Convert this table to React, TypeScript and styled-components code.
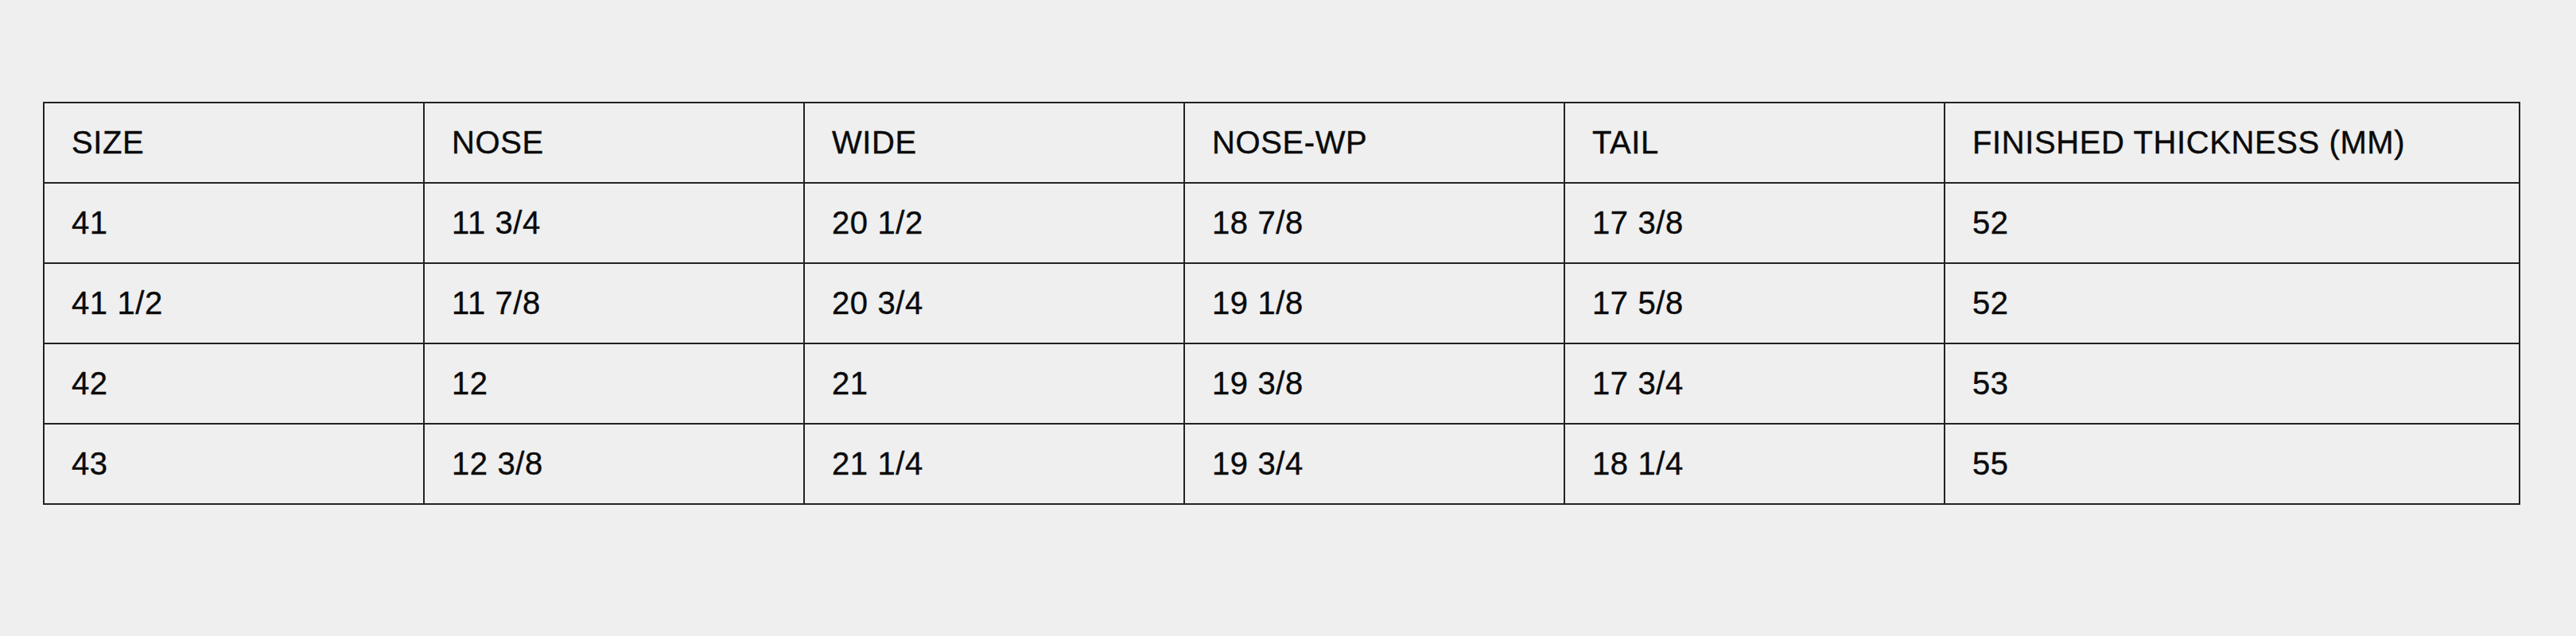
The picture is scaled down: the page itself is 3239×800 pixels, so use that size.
import React from 'react';
import styled, { createGlobalStyle } from 'styled-components';

const GlobalStyle = createGlobalStyle`
  html, body {
    margin: 0;
    padding: 0;
    background: #efefef;
  }
`;

const Page = styled.div`
  min-height: 800px;
  box-sizing: border-box;
  padding: 128px 70px 0 54px;
  background: #efefef;
  font-family: "Liberation Sans", Arial, sans-serif;
  color: #0a0a0a;
`;

const SizeTable = styled.table`
  width: 100%;
  border-collapse: collapse;
  table-layout: fixed;
  border: 2px solid #222;
`;

const Col = styled.col<{ $w?: number }>`
  width: ${p => (p.$w ? `${p.$w}px` : 'auto')};
`;

const Cell = styled.td`
  height: 101px;
  box-sizing: border-box;
  padding: 0 0 0 34px;
  border: 2px solid #222;
  font-size: 40px;
  font-weight: 400;
  letter-spacing: 0.6px;
  -webkit-text-stroke: 0.4px #0a0a0a;
  text-align: left;
  vertical-align: middle;
  white-space: nowrap;
`;

const HeadCell = styled(Cell).attrs({ as: 'th' })`
  font-weight: 400;
`;

const headers = ['SIZE', 'NOSE', 'WIDE', 'NOSE-WP', 'TAIL', 'FINISHED THICKNESS (MM)'];

const rows = [
  ['41', '11 3/4', '20 1/2', '18 7/8', '17 3/8', '52'],
  ['41 1/2', '11 7/8', '20 3/4', '19 1/8', '17 5/8', '52'],
  ['42', '12', '21', '19 3/8', '17 3/4', '53'],
  ['43', '12 3/8', '21 1/4', '19 3/4', '18 1/4', '55'],
];

const App: React.FC = () => {
  return (
    <Page>
      <GlobalStyle />
      <SizeTable>
        <colgroup>
          <Col $w={478} />
          <Col $w={478} />
          <Col $w={478} />
          <Col $w={478} />
          <Col $w={478} />
          <Col />
        </colgroup>
        <thead>
          <tr>
            {headers.map(h => (
              <HeadCell key={h}>{h}</HeadCell>
            ))}
          </tr>
        </thead>
        <tbody>
          {rows.map((r, i) => (
            <tr key={i}>
              {r.map((v, j) => (
                <Cell key={j}>{v}</Cell>
              ))}
            </tr>
          ))}
        </tbody>
      </SizeTable>
    </Page>
  );
};

export default App;
